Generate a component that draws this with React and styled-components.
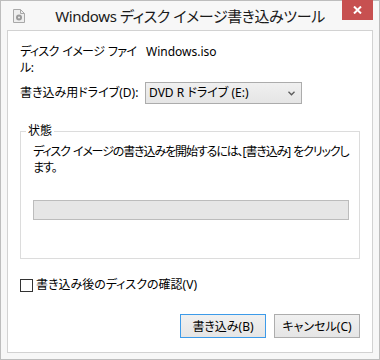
import React from "react";
import styled, { createGlobalStyle } from "styled-components";

const GlobalStyle = createGlobalStyle`
  html, body {
    margin: 0;
    padding: 0;
    background: #ffffff;
  }
  body {
    font-family: "Noto Sans", "Noto Sans CJK JP", sans-serif;
    font-feature-settings: "palt";
    font-size: 12px;
    color: #000;
  }
`;

const Window = styled.div`
  box-sizing: border-box;
  width: 380px;
  height: 360px;
  border: 1px solid #bdbdbd;
  background: #f7f7f7;
  padding: 0 6px 6px;
  display: flex;
  flex-direction: column;
`;

const TitleBar = styled.div`
  height: 29px;
  flex: none;
  display: grid;
  grid-template-columns: 1fr auto 1fr;
  align-items: center;
`;

const AppIcon = styled.svg`
  justify-self: start;
  align-self: start;
  margin: 8px 0 0 6px;
`;

const Title = styled.div`
  font-size: 15px;
  line-height: 20px;
  letter-spacing: -0.4px;
  color: #1a1a1a;
  white-space: nowrap;
  padding-top: 1px;
`;

const CloseButton = styled.div`
  justify-self: end;
  align-self: start;
  margin-top: -1px;
  width: 31px;
  height: 20px;
  background: #c75050;
  display: flex;
  align-items: center;
  justify-content: center;
`;

const Client = styled.div`
  flex: 1;
  border: 1px solid #d2d2d2;
  background: #ffffff;
  padding: 13px 12px 14px;
  display: flex;
  flex-direction: column;
`;

const Fields = styled.div`
  display: grid;
  grid-template-columns: 125px 1fr;
  row-gap: 6px;
  align-items: start;
`;

const FieldLabel = styled.div`
  line-height: 16px;
  white-space: nowrap;
  letter-spacing: ${(p) => (p.$tight ? -0.6 : 0)}px;
  word-spacing: ${(p) => (p.$tight ? 1 : 0)}px;
  padding-top: ${(p) => (p.$inset ? 3 : 0)}px;
`;

const FieldValue = styled.div`
  line-height: 16px;
  padding-left: 1px;
`;

const ComboBox = styled.div`
  box-sizing: border-box;
  width: 157px;
  height: 22px;
  border: 1px solid #acacac;
  background: linear-gradient(#f0f0f0, #e5e5e5);
  display: flex;
  align-items: center;
  justify-content: space-between;
  padding: 0 6px 0 3px;
  line-height: 16px;
`;

const GroupBox = styled.fieldset`
  margin: 19px 0 0;
  padding: 5px 10px 38px 12px;
  border: 1px solid #dcdcdc;
  min-width: 0;
`;

const GroupLegend = styled.legend`
  margin-left: -7px;
  padding: 0 2px;
  line-height: 16px;
  font-size: 12px;
`;

const StatusText = styled.p`
  margin: 0;
  line-height: 16px;
  white-space: nowrap;
  letter-spacing: -1.1px;
  word-spacing: 1px;
`;

const Progress = styled.div`
  box-sizing: border-box;
  margin-top: 24px;
  height: 20px;
  border: 1px solid #bcbcbc;
  background: #e6e6e6;
`;

const CheckRow = styled.label`
  margin-top: 18px;
  display: flex;
  align-items: center;
  gap: 3px;
  line-height: 16px;
`;

const CheckBox = styled.span`
  box-sizing: border-box;
  width: 13px;
  height: 13px;
  border: 1px solid #333333;
  background: #ffffff;
`;

const ButtonRow = styled.div`
  margin-top: auto;
  display: flex;
  justify-content: flex-end;
  gap: 8px;
`;

const Button = styled.button`
  box-sizing: border-box;
  width: 86px;
  height: 24px;
  padding: 0;
  border: 1px solid ${(p) => (p.$primary ? "#3d9be9" : "#adadad")};
  background: linear-gradient(#f0f0f0, #e5e5e5);
  font: inherit;
  font-size: 12px;
  color: #000;
`;

export default function App() {
  return (
    <>
      <GlobalStyle />
      <Window>
        <TitleBar>
          <AppIcon width="12" height="14" viewBox="0 0 12 14">
            <path d="M0.5 0.5h7l4 4v9h-11z" fill="#eeeeee" stroke="#a8a8a8" />
            <path d="M7.5 0.5v4h4" fill="none" stroke="#a8a8a8" />
            <circle cx="6" cy="8.5" r="3" fill="#9a9a9a" />
            <circle cx="6" cy="8.5" r="1" fill="#eeeeee" />
          </AppIcon>
          <Title>Windows ディスク イメージ書き込みツール</Title>
          <CloseButton>
            <svg width="9" height="8" viewBox="0 0 9 8">
              <path d="M1 0.5l7 7M8 0.5l-7 7" stroke="#ffffff" strokeWidth="2" />
            </svg>
          </CloseButton>
        </TitleBar>
        <Client>
          <Fields>
            <FieldLabel $tight>
              ディスク イメージ ファイ
              <br />
              ル:
            </FieldLabel>
            <FieldValue>Windows.iso</FieldValue>
            <FieldLabel $inset>書き込み用ドライブ(D):</FieldLabel>
            <ComboBox>
              <span>DVD R ドライブ (E:)</span>
              <svg width="7" height="5" viewBox="0 0 7 5">
                <path d="M0.5 0.8l3 3 3-3" fill="none" stroke="#5a5a5a" strokeWidth="1.3" />
              </svg>
            </ComboBox>
          </Fields>
          <GroupBox>
            <GroupLegend>状態</GroupLegend>
            <StatusText>
              ディスク イメージの書き込みを開始するには、[書き込み] をクリックし
              <br />
              ます。
            </StatusText>
            <Progress />
          </GroupBox>
          <CheckRow>
            <CheckBox />
            <span>書き込み後のディスクの確認(V)</span>
          </CheckRow>
          <ButtonRow>
            <Button $primary>書き込み(B)</Button>
            <Button>キャンセル(C)</Button>
          </ButtonRow>
        </Client>
      </Window>
    </>
  );
}
